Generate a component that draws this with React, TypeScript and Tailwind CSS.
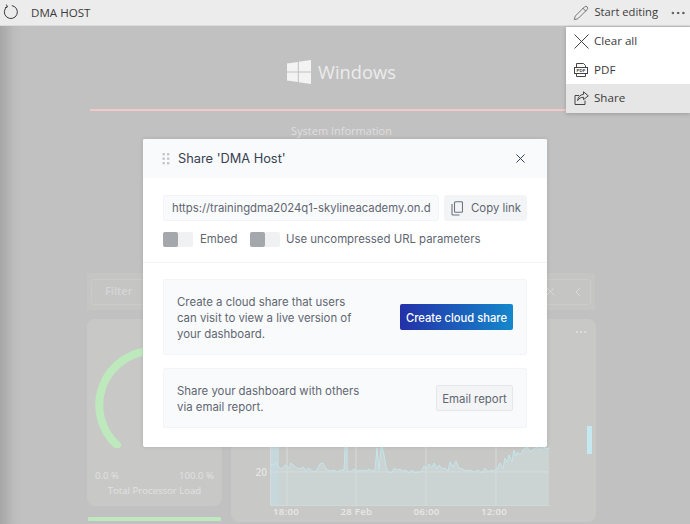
import { ChevronLeft, MoreHorizontal, Pencil, X } from "lucide-react";

const sans = "font-['Open_Sans',sans-serif]";
const inter = "font-['Inter',sans-serif]";

const linePoints =
  "270,465 274,465 276,462 278,467 282,469 285,465 289,468 291,463 294,466 297,468 300,469 303,467 306,471 308,468 311,470 314,472 317,470 320,464 323,463 326,469 330,471 334,470 337,472 341,470 344,470 345,447 347,447 347,470 350,472 354,469 358,471 362,470 366,471 369,469 372,471 375,470 377,448 379,470 381,448 382,447 384,455 386,467 389,473 392,472 394,468 397,470 400,469 403,471 406,470 409,473 412,470 415,473 418,472 421,472 424,466 427,469 429,464 432,468 434,463 437,469 439,465 442,469 445,468 448,471 450,462 453,467 456,461 459,468 462,469 466,471 470,470 474,472 478,470 482,473 485,468 488,472 491,470 494,471 497,469 500,463 503,469 505,458 507,463 509,455 512,462 514,450 516,456 518,452 520,455 524,449 527,447 530,452 534,449 537,447 540,450 543,446 546,449 549,448";

function GripDots() {
  return (
    <svg width="8" height="12" viewBox="0 0 8 12" fill="#c4c8ce">
      {[0, 4.5, 9].map((y) => (
        <g key={y}>
          <rect x="0.5" y={y} width="2.4" height="2.4" />
          <rect x="5" y={y} width="2.4" height="2.4" />
        </g>
      ))}
    </svg>
  );
}

function ReloadIcon() {
  return (
    <svg width="16" height="16" viewBox="0 0 16 16" fill="none" stroke="#3a3a3a" strokeWidth="1">
      <path d="M4.3 2.6 A6.5 6.5 0 1 0 8.8 1.6" />
      <path d="M3.4 0.6 L4.4 3 L2 3.8" />
    </svg>
  );
}

function PdfIcon() {
  return (
    <svg width="14" height="16" viewBox="0 0 14 16" fill="none" stroke="#444" strokeWidth="1">
      <path d="M2.5 5V1.5H9.5L11.5 3.5V5" />
      <rect x="0.5" y="5.5" width="13" height="6" />
      <path d="M2.5 11.5V14.5H11.5V11.5" />
      <text x="7" y="10.2" textAnchor="middle" fontSize="4.4" fontWeight="700" fill="#444" stroke="none" fontFamily="Liberation Sans, sans-serif">
        PDF
      </text>
    </svg>
  );
}

function ShareIcon() {
  return (
    <svg width="15" height="14" viewBox="0 0 15 14" fill="none" stroke="#444" strokeWidth="1">
      <path d="M5 4.5H1V13.5H11V9.5" />
      <path d="M9.5 0.8L14.3 4.8L9.5 8.6V6.3C7 6.2 5 7.3 3.6 9.6C3.9 6.3 6 3.7 9.5 3.3Z" />
    </svg>
  );
}

function CrossIcon() {
  return (
    <svg width="15" height="15" viewBox="0 0 15 15" fill="none" stroke="#444" strokeWidth="1">
      <path d="M0.5 0.5L14.5 14.5M14.5 0.5L0.5 14.5" />
    </svg>
  );
}

function CopyIcon() {
  return (
    <svg width="12" height="15" viewBox="0 0 12 15" fill="none" stroke="#6b7280" strokeWidth="1.1">
      <rect x="3.5" y="0.7" width="8" height="10.6" rx="1" />
      <path d="M1 3V13A1 1 0 0 0 2 14H8.5" />
    </svg>
  );
}

function WindowsLogo() {
  return (
    <svg width="24" height="24" viewBox="0 0 24 24" fill="#f3f3f3">
      <path d="M0 3.4L10.8 1.9V11.4H0Z" />
      <path d="M11.8 1.8L24 0V11.4H11.8Z" />
      <path d="M0 12.4H10.8V22L0 20.5Z" />
      <path d="M11.8 12.4H24V24L11.8 22.2Z" />
    </svg>
  );
}

function Toggle() {
  return (
    <div className="flex h-[15px] w-[30px] rounded-[2px] bg-[#f0f1f3]">
      <div className="h-[15px] w-[15px] rounded-[2px] bg-[#a4a7ac]" />
    </div>
  );
}

function MenuRow({ icon, label, active }: { icon: React.ReactNode; label: string; active?: boolean }) {
  return (
    <div className={`flex h-[28.5px] items-center pl-[7px] text-[11.6px] text-[#3b3b3b] ${active ? "bg-[#e6e6e6]" : ""}`}>
      <span className="flex w-[16px] justify-center">{icon}</span>
      <span className="mb-[1px] ml-[5px]">{label}</span>
    </div>
  );
}

function Backdrop() {
  return (
    <div className="flex h-[498px] flex-col items-center bg-[linear-gradient(90deg,#a6a6a6_0px,#bcbcbc_14px,#c1c1c1_22px)]">
      {/* logo block */}
      <div className="mr-[7px] mt-[34px] flex h-[24px] items-center gap-[7px]">
        <WindowsLogo />
        <span className={`${sans} text-[18.3px] text-[#ececec]`}>Windows</span>
      </div>
      <div className="mt-[25px] h-[2px] w-[510px] bg-[#f0c9c9]" />
      <div className={`${sans} mr-[7px] mt-[12px] text-[11px] leading-[16px] text-[#dedede]`}>System Information</div>

      {/* filter bar */}
      <div className="ml-[87px] mt-[134px] flex h-[37px] w-[508px] items-center self-start bg-[#c5c5c4] px-[4px]">
        <div className="flex h-[26px] flex-1 items-center justify-between rounded-[3px] border border-[#cbcbca] pl-[13px] pr-[4px]">
          <span className={`${sans} text-[11px] font-semibold text-[#d6d6d6]`}>Filter</span>
          <div className="flex items-center gap-[12px] text-[#dcdcdc]">
            <X size={15} strokeWidth={1.2} />
            <ChevronLeft size={16} strokeWidth={1.4} />
          </div>
        </div>
      </div>

      {/* widgets */}
      <div className="ml-[87px] mt-[9px] flex items-start gap-[9px] self-start">
        <div className="flex w-[135px] shrink-0 flex-col">
          <div className="flex h-[187px] flex-col items-center rounded-[8px] bg-[#c8c8c7] pt-[29px]">
            <svg width="135" height="100" viewBox="87 348 135 100" fill="none">
              <path d="M117 445 A54 54 0 0 1 154 351" stroke="#bde9bd" strokeWidth="8" strokeLinecap="round" />
            </svg>
            <div className={`${sans} mt-[21px] flex w-full justify-between px-[8px] text-[9.6px] text-[#e2e2e2]`}>
              <span>0.0 %</span>
              <span>100.0 %</span>
            </div>
            <div className={`${sans} mt-[1px] text-[9.6px] text-[#e2e2e2]`}>Total Processor Load</div>
          </div>
          <div className="mx-[1px] mt-[11px] h-[4px] rounded-[1px] bg-[#bfe8bf]" />
        </div>

        <div className="flex h-[203px] w-[365px] shrink-0 flex-col rounded-[8px] bg-[#c8c8c6]">
          <div className="flex h-[27px] justify-end pr-[8px] pt-[6px] text-[#e4e4e4]">
            <MoreHorizontal size={14} strokeWidth={1.6} />
          </div>
          <div className="flex">
            <div className={`${sans} w-[39px] pr-[3px] pt-[119px] text-right text-[10px] font-semibold text-[#e6e6e6]`}>20</div>
            <svg width="279" height="160" viewBox="270 346 279 160" className="shrink-0">
              <polygon points={`270,506 ${linePoints} 549,506`} fill="#cbd3d3" />
              <rect x="270" y="346" width="9" height="160" fill="#c6d8dc" />
              <path d="M287 346V506M356 346V506M426 346V506M496 346V506M270 472H549" stroke="#d6dcdc" strokeWidth="1" />
              <polyline points={linePoints} fill="none" stroke="#c4e6ec" strokeWidth="1" />
              <path d="M270.5 346V506H549" fill="none" stroke="#d6dcdc" />
            </svg>
            <div className="ml-[38px] mt-[80px] h-[28px] w-[5px] bg-[#c6e8f1]" />
          </div>
          <div className={`${sans} ml-[42px] mt-[-1px] flex w-[234px] justify-between text-[9.6px] font-semibold tracking-[0.3px] text-[#e8e8e8]`}>
            <span>18:00</span>
            <span>28 Feb</span>
            <span>06:00</span>
            <span>12:00</span>
          </div>
        </div>
      </div>
    </div>
  );
}

function ShareDialog() {
  return (
    <div className={`${inter} absolute left-[143px] top-[139px] w-[404px] overflow-hidden rounded-[2px] bg-white shadow-[0_0_4px_rgba(0,0,0,0.12)]`}>
      <div className="flex h-[39px] items-center justify-between bg-[#f9fafb] pl-[19px] pr-[22px]">
        <div className="flex items-center gap-[8px]">
          <GripDots />
          <span className="text-[12.8px] text-[#374151]">Share 'DMA Host'</span>
        </div>
        <X size={15} strokeWidth={1.6} className="mr-[-3px] text-[#374151]" />
      </div>

      <div className="border-b border-[#f3f4f6] px-[20px] pb-[15px] pt-[17px]">
        <div className="flex gap-[5px]">
          <div className="flex h-[26px] w-[276px] items-center whitespace-nowrap rounded-[3px] border border-[#f3f4f6] bg-[#f9fafb] pl-[8px] pt-[1px] text-[11.3px] text-[#5f6672]">
            https://trainingdma2024q1-skylineacademy.on.d
          </div>
          <div className="flex h-[26px] w-[83px] items-center justify-center gap-[8px] rounded-[3px] bg-[#f3f4f6] pl-[1px] text-[11.4px] text-[#5f6672]">
            <CopyIcon />
            <span className="pt-[1px]">Copy link</span>
          </div>
        </div>
        <div className="mt-[10px] flex h-[16px] items-center text-[11.4px] text-[#5f6672]">
          <Toggle />
          <span className="ml-[7px] w-[50px] pt-[1px]">Embed</span>
          <Toggle />
          <span className="ml-[6px] pt-[1px]">Use uncompressed URL parameters</span>
        </div>
      </div>

      <div className="flex flex-col gap-[13px] px-[20px] pb-[19px] pt-[16px] text-[11.4px] leading-[16px] text-[#5f6672]">
        <div className="flex h-[76px] items-center justify-between rounded-[2px] border border-[#f3f4f6] bg-[#f9fafb] px-[13px]">
          <p className="w-[180px] pt-[1px]">Create a cloud share that users can visit to view a live version of your dashboard.</p>
          <div className="flex h-[26px] w-[113px] items-center justify-center rounded-[2px] bg-[linear-gradient(90deg,#2430a8,#1488cc)] pt-[1px] text-[11.2px] font-medium text-white">
            Create cloud share
          </div>
        </div>
        <div className="flex h-[60px] items-center justify-between rounded-[2px] border border-[#f3f4f6] bg-[#f9fafb] px-[13px]">
          <p className="w-[190px] pt-[1px]">Share your dashboard with others via email report.</p>
          <div className="flex h-[26px] w-[77px] items-center justify-center rounded-[2px] border border-[#e5e7eb] bg-[#f3f4f6] pt-[1px]">
            Email report
          </div>
        </div>
      </div>
    </div>
  );
}

export default function App() {
  return (
    <div className={`${sans} relative h-[524px] w-[690px] overflow-hidden bg-[#c1c1c1]`}>
      <header className="flex h-[26px] items-center justify-between border-b border-[#dcdcdc] bg-[#ececec] pl-[3px] pr-[3px] text-[11.6px] text-[#3b3b3b]">
        <div className="flex items-center gap-[12px]">
          <ReloadIcon />
          <span>DMA HOST</span>
        </div>
        <div className="flex items-center">
          <Pencil size={16} strokeWidth={1} />
          <span className="ml-[5px] text-[11.2px]">Start editing</span>
          <MoreHorizontal size={18} strokeWidth={1.2} className="ml-[11px]" />
        </div>
      </header>

      <Backdrop />
      <ShareDialog />

      <div className="absolute right-0 top-[27px] w-[124px] bg-white shadow-[0_1px_4px_rgba(0,0,0,0.2)]">
        <MenuRow icon={<CrossIcon />} label="Clear all" />
        <MenuRow icon={<PdfIcon />} label="PDF" />
        <MenuRow icon={<ShareIcon />} label="Share" active />
      </div>
    </div>
  );
}
